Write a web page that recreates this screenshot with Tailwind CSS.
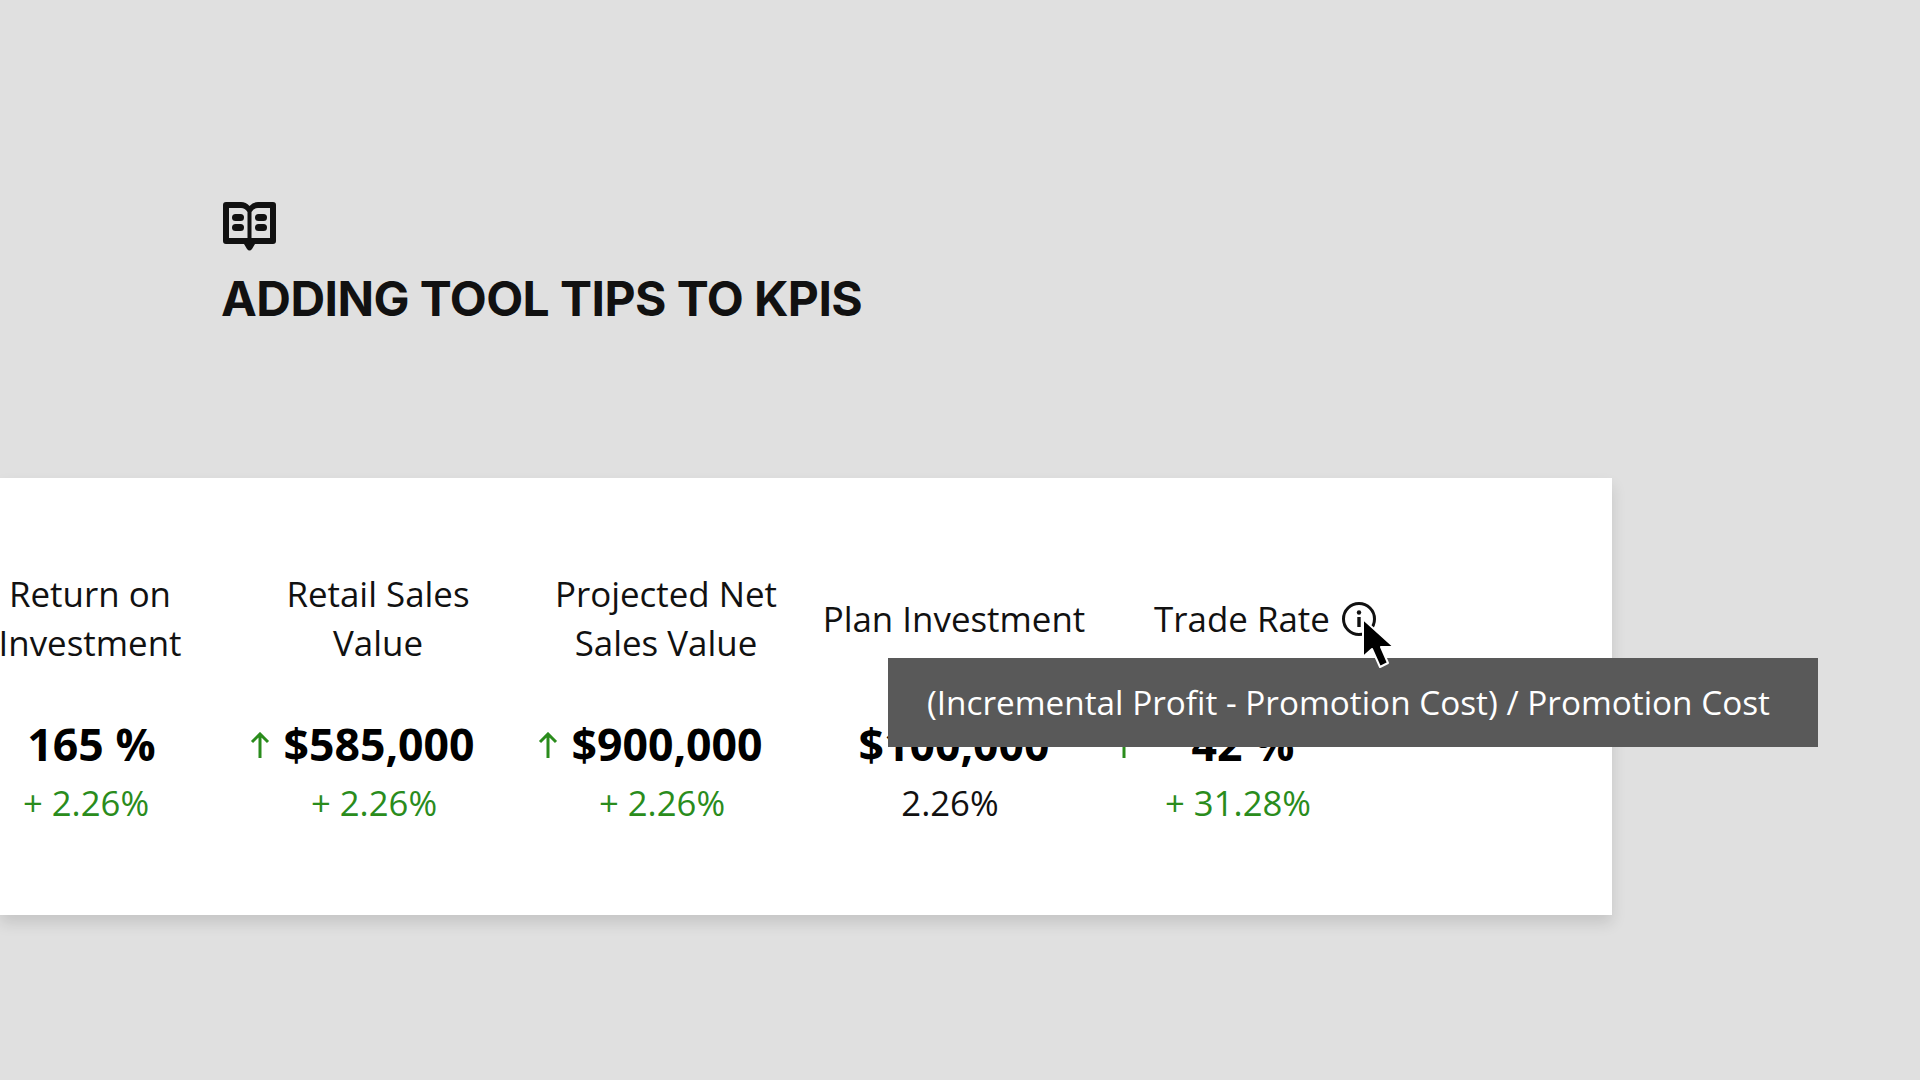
<!DOCTYPE html>
<html lang="en">
<head>
  <meta charset="UTF-8" />
  <title>Adding Tool Tips to KPIs</title>
  <script src="https://cdn.jsdelivr.net/npm/@tailwindcss/browser@4"></script>
</head>
<body class="bg-[#e0e0e0] text-[#111] h-[1080px] w-[1920px] overflow-hidden font-['Open_Sans',sans-serif]">
  <header class="pt-[202px] pl-[223px] h-[478px]">
    <svg width="53" height="49" viewBox="0 0 53 49" class="block">
      <path fill="#111" fill-rule="evenodd" d="M3 0H18Q23 0 26.5 4Q30 0 35 0H50Q53 0 53 3V39Q53 42 50 42H32L29 47Q26.5 50 24 47L21 42H3Q0 42 0 39V3Q0 0 3 0ZM6 6V36H24.5V10Q22 6 18 6ZM47 6H35Q31 6 28.5 10V36H47Z"/>
      <rect x="9" y="12" width="12" height="7" rx="3.5" fill="#111"/>
      <rect x="9" y="22" width="12" height="7" rx="3.5" fill="#111"/>
      <rect x="32" y="12" width="12" height="7" rx="3.5" fill="#111"/>
      <rect x="32" y="22" width="12" height="7" rx="3.5" fill="#111"/>
    </svg>
    <h1 class="mt-[19px] font-['Inter',sans-serif] font-bold text-[48px] leading-[58px] tracking-[-0.55px] -ml-[2px] whitespace-nowrap">ADDING TOOL TIPS TO KPIS</h1>
  </header>

  <section class="relative w-[1612px] h-[437px] bg-white shadow-[0_8px_14px_rgba(0,0,0,0.12)]">
    <div class="flex -ml-[54px] pt-[91px] text-center">
      <div class="w-[288px] shrink-0">
        <div class="h-[98px] flex items-center justify-center text-[34.9px] leading-[49px] whitespace-nowrap">Return on<br>Investment</div>
        <div class="mt-[47px] pl-[3px] text-[44.6px] leading-[60px] font-bold text-black">165 %</div>
        <div class="mt-[4px] pr-[8px] text-[34.7px] leading-[50px] text-[#2a8c1c]">+ 2.26%</div>
      </div>
      <div class="w-[288px] shrink-0">
        <div class="h-[98px] flex items-center justify-center text-[34.9px] leading-[49px]">Retail Sales<br>Value</div>
        <div class="mt-[47px] pl-[2px] text-[44.6px] leading-[60px] font-bold text-black relative">
          <svg width="20" height="26" viewBox="0 0 20 26" fill="none" stroke="#2a8c1c" stroke-width="3" class="absolute left-[16px] top-[18px]"><path d="M10 26V2M2 10L10 2L18 10"/></svg>
          $585,000
        </div>
        <div class="mt-[4px] pr-[8px] text-[34.7px] leading-[50px] text-[#2a8c1c]">+ 2.26%</div>
      </div>
      <div class="w-[288px] shrink-0">
        <div class="h-[98px] flex items-center justify-center text-[34.9px] leading-[49px]">Projected Net<br>Sales Value</div>
        <div class="mt-[47px] pl-[2px] text-[44.6px] leading-[60px] font-bold text-black relative">
          <svg width="20" height="26" viewBox="0 0 20 26" fill="none" stroke="#2a8c1c" stroke-width="3" class="absolute left-[16px] top-[18px]"><path d="M10 26V2M2 10L10 2L18 10"/></svg>
          $900,000
        </div>
        <div class="mt-[4px] pr-[8px] text-[34.7px] leading-[50px] text-[#2a8c1c]">+ 2.26%</div>
      </div>
      <div class="w-[288px] shrink-0">
        <div class="h-[98px] flex items-center justify-center text-[34.9px] leading-[49px] whitespace-nowrap">Plan Investment</div>
        <div class="mt-[47px] text-[44.6px] leading-[60px] font-bold text-black">$100,000</div>
        <div class="mt-[4px] pr-[8px] text-[34.7px] leading-[50px]">2.26%</div>
      </div>
      <div class="w-[288px] shrink-0">
        <div class="h-[98px] flex items-center justify-center text-[34.9px] leading-[49px]">
          <span class="relative">Trade Rate
            <svg width="36" height="36" viewBox="0 0 36 36" fill="none" class="absolute -right-[47px] top-[7px]">
              <circle cx="18" cy="18" r="15.5" stroke="#111" stroke-width="3"/>
              <circle cx="18" cy="11.5" r="2.2" fill="#111"/>
              <path d="M18 16V26" stroke="#111" stroke-width="3.4"/>
            </svg>
          </span>
        </div>
        <div class="mt-[47px] pl-[2px] text-[44.6px] leading-[60px] font-bold text-black relative">
          <svg width="20" height="26" viewBox="0 0 20 26" fill="none" stroke="#2a8c1c" stroke-width="3" class="absolute left-[16px] top-[18px]"><path d="M10 26V2M2 10L10 2L18 10"/></svg>
          42 %
        </div>
        <div class="mt-[4px] pr-[8px] text-[34.7px] leading-[50px] text-[#2a8c1c]">+ 31.28%</div>
      </div>
    </div>

    <div class="absolute left-[888px] top-[180px] w-[930px] h-[89px] bg-[#595959] text-white text-[33.3px] leading-[89px] pl-[39px] whitespace-nowrap">(Incremental Profit - Promotion Cost) / Promotion Cost</div>

    <svg width="34" height="52" viewBox="0 0 34 52" class="absolute left-[1361px] top-[139px]">
      <path d="M2 2V40L11 32L19 50L27 46L20 30H33Z" fill="#000" stroke="#fff" stroke-width="2" stroke-linejoin="round"/>
    </svg>
  </section>
</body>
</html>
